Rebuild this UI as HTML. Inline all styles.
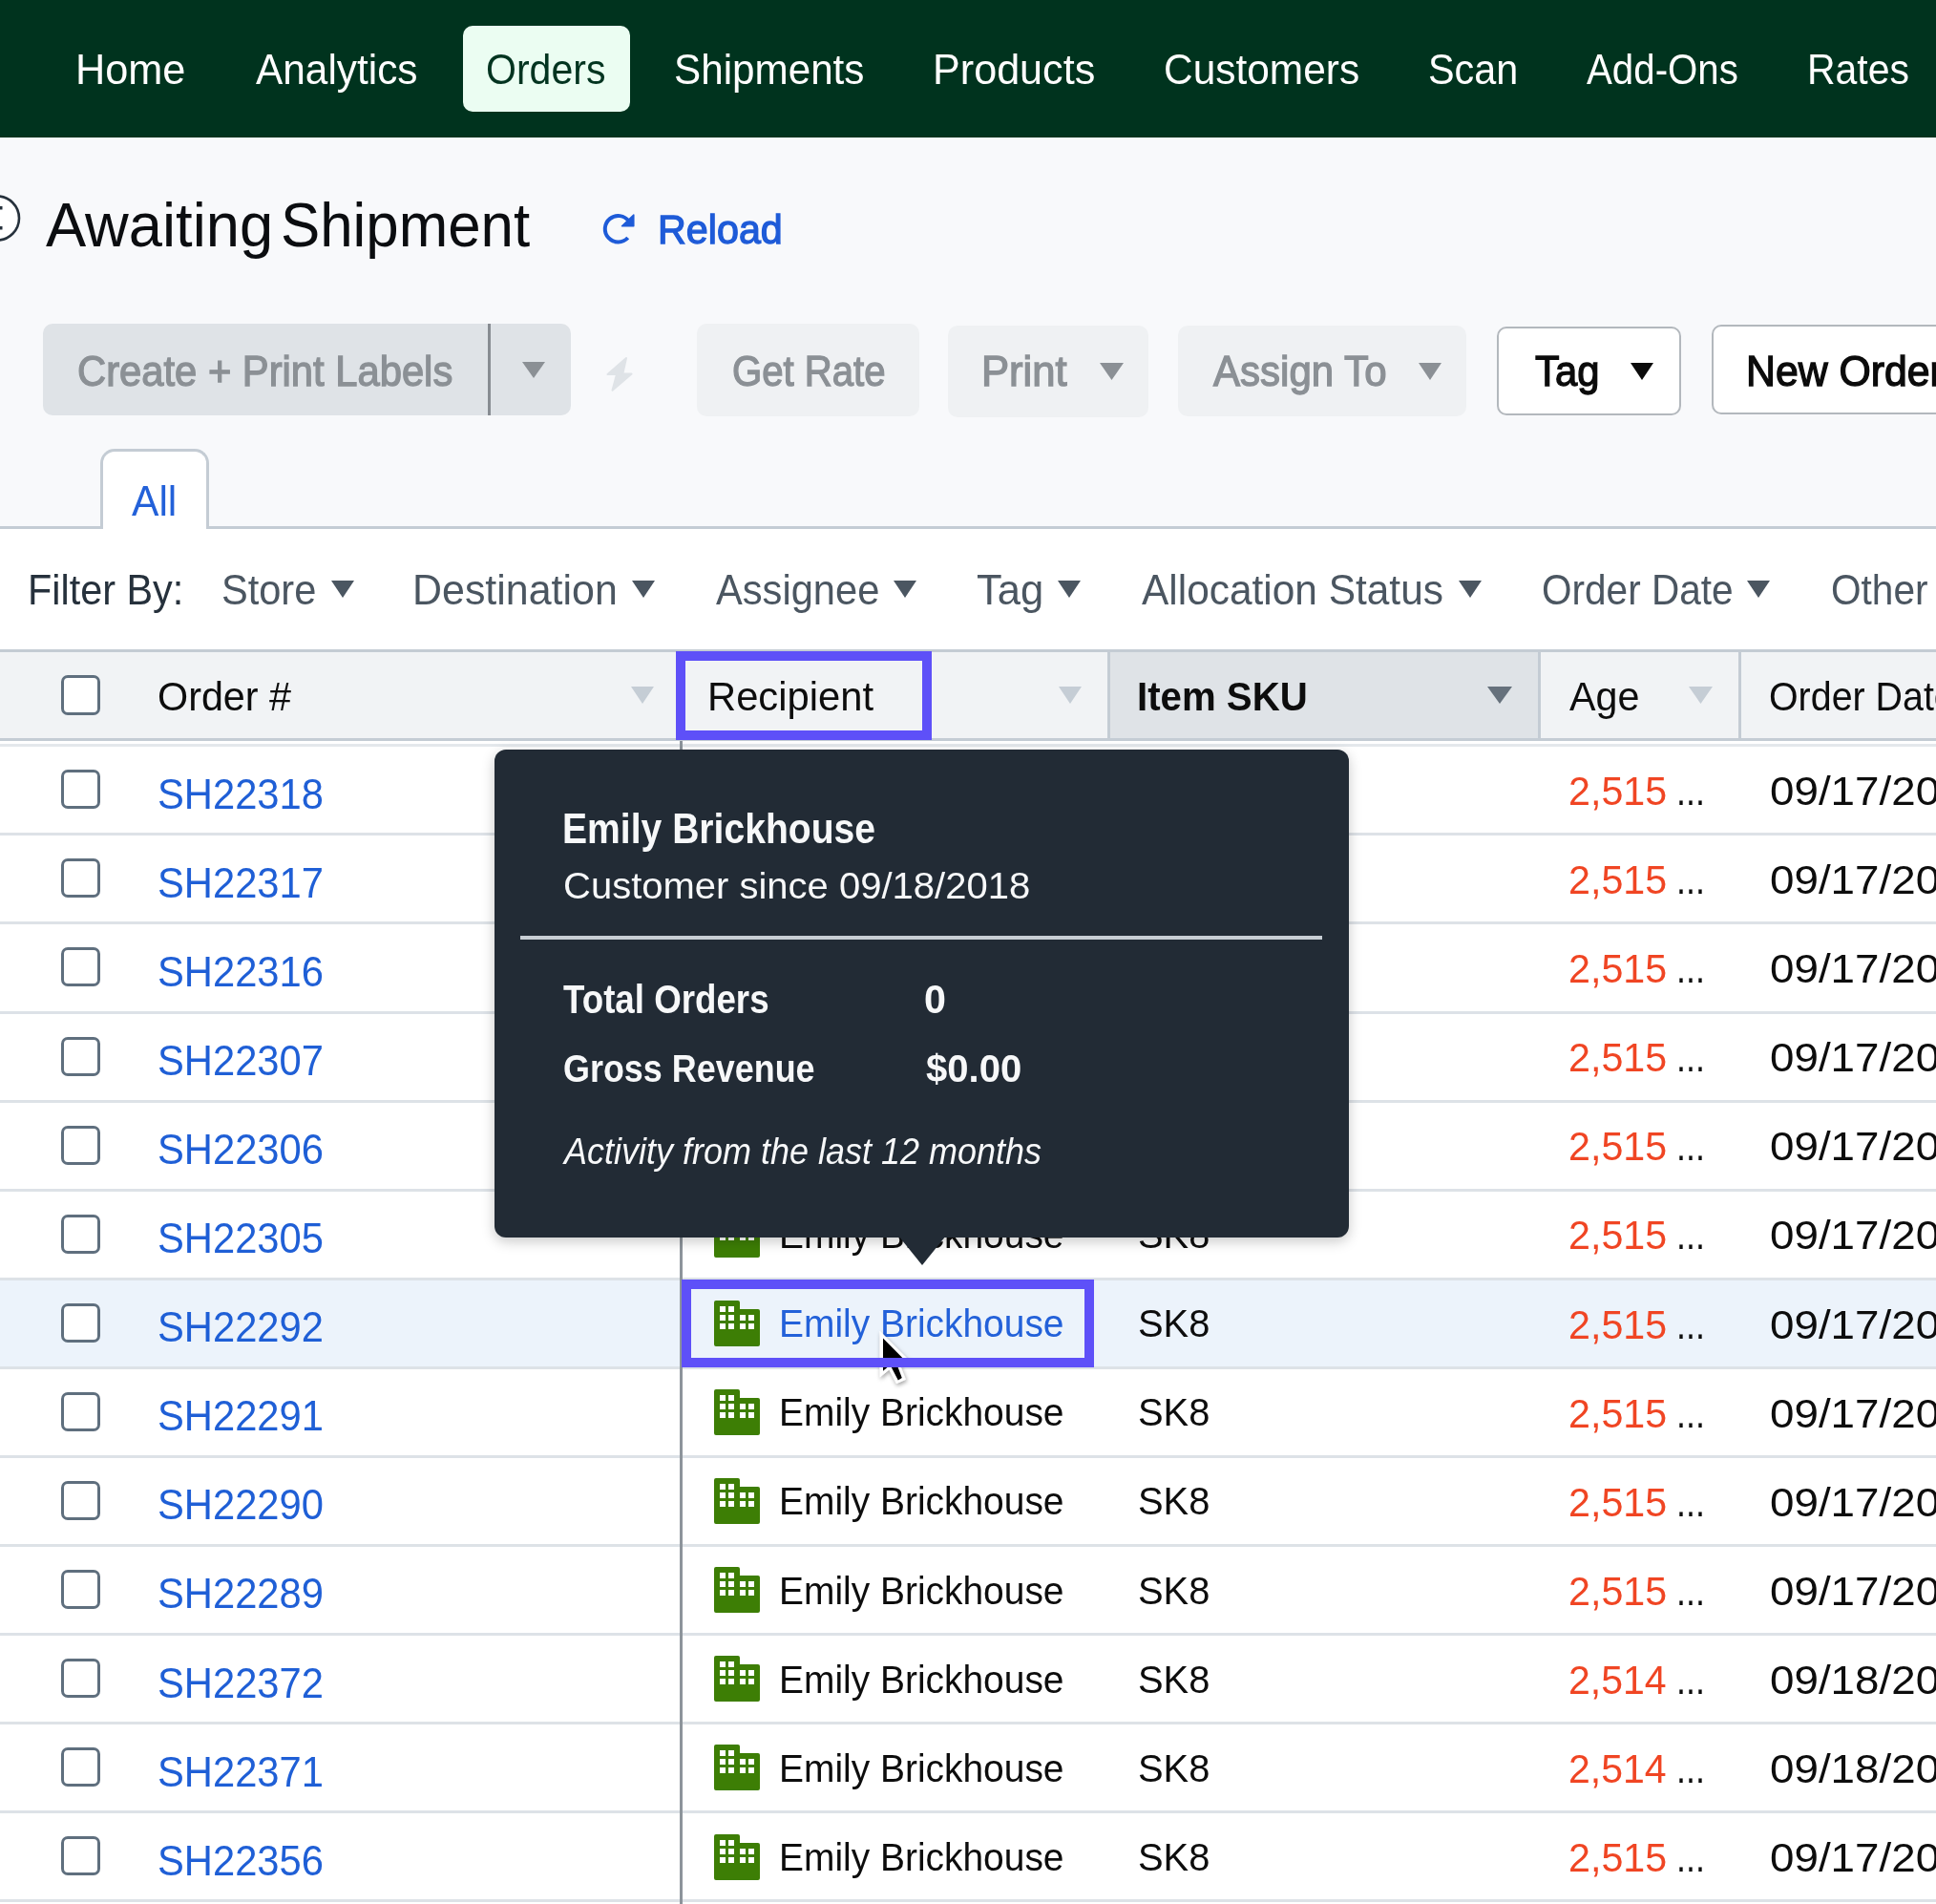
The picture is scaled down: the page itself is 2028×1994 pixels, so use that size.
<!DOCTYPE html>
<html><head><meta charset="utf-8"><title>Awaiting Shipment</title>
<style>
html,body{margin:0;padding:0;}
body{width:2028px;height:1994px;position:relative;overflow:hidden;background:#fff;font-family:"Liberation Sans",sans-serif;}
.t{position:absolute;white-space:nowrap;transform-origin:0 0;}
.r{position:absolute;box-sizing:border-box;}
</style></head><body>

<div class="r" style="left:0px;top:0px;width:2028px;height:144px;background:#00331e;"></div>
<div class="r" style="left:0px;top:144px;width:2028px;height:410px;background:#f8f9fb;"></div>
<div class="r" style="left:485px;top:27px;width:175px;height:90px;background:#ebfdf2;border-radius:10px;"></div>
<div class="t" style="left:79.43px;top:51.09px;font-size:44.19px;line-height:44.19px;color:#ffffff;transform:scaleX(0.9791);">Home</div>
<div class="t" style="left:267.89px;top:51.09px;font-size:44.19px;line-height:44.19px;color:#ffffff;transform:scaleX(0.9589);">Analytics</div>
<div class="t" style="left:509.05px;top:51.09px;font-size:44.19px;line-height:44.19px;color:#023420;transform:scaleX(0.9289);">Orders</div>
<div class="t" style="left:706.30px;top:51.09px;font-size:44.19px;line-height:44.19px;color:#ffffff;transform:scaleX(0.9554);">Shipments</div>
<div class="t" style="left:977.24px;top:51.09px;font-size:44.19px;line-height:44.19px;color:#ffffff;transform:scaleX(0.9762);">Products</div>
<div class="t" style="left:1219.38px;top:51.09px;font-size:44.19px;line-height:44.19px;color:#ffffff;transform:scaleX(0.9601);">Customers</div>
<div class="t" style="left:1495.74px;top:51.09px;font-size:44.19px;line-height:44.19px;color:#ffffff;transform:scaleX(0.9355);">Scan</div>
<div class="t" style="left:1662.30px;top:51.09px;font-size:44.19px;line-height:44.19px;color:#ffffff;transform:scaleX(0.9111);">Add-Ons</div>
<div class="t" style="left:1893.12px;top:51.09px;font-size:44.19px;line-height:44.19px;color:#ffffff;transform:scaleX(0.9270);">Rates</div>
<svg class="r" style="left:0;top:200px" width="30" height="60" viewBox="0 0 30 60"><circle cx="-3" cy="28.5" r="23" fill="#fff" stroke="#26313c" stroke-width="2.6"/><rect x="0" y="16" width="2.5" height="3.5" fill="#26313c"/><rect x="0" y="37" width="2.5" height="3.5" fill="#26313c"/></svg>
<div class="t" style="left:47.84px;top:203.72px;font-size:64.70px;line-height:64.70px;color:#0b0d10;transform:scaleX(0.9788);">Awaiting</div>
<div class="t" style="left:294.22px;top:203.72px;font-size:64.70px;line-height:64.70px;color:#0b0d10;transform:scaleX(0.9557);">Shipment</div>
<svg class="r" style="left:625px;top:218px" width="46" height="44" viewBox="0 0 46 44"><path d="M32.7 31 A13.75 13.75 0 1 1 33.8 13.9" fill="none" stroke="#1e5bd8" stroke-width="4"/><path d="M38.8 7 V18.8 H26.5 Z" fill="#1e5bd8" stroke="#1e5bd8" stroke-width="1.5" stroke-linejoin="round"/></svg>
<div class="t" style="left:689.21px;top:218.50px;font-size:42.88px;line-height:42.88px;color:#1e5bd8;-webkit-text-stroke:1.29px #1e5bd8;transform:scaleX(0.9627);">Reload</div>
<div class="r" style="left:45px;top:339px;width:553px;height:96px;background:#dfe3e7;border-radius:10px;"></div>
<div class="r" style="left:511px;top:339px;width:3px;height:96px;background:#878c92;"></div>
<div class="t" style="left:80.54px;top:366.59px;font-size:44.19px;line-height:44.19px;color:#8b9095;-webkit-text-stroke:1.33px #8b9095;transform:scaleX(0.9446);">Create + Print Labels</div>
<svg class="r" style="left:547px;top:379px;" width="24" height="17" viewBox="0 0 24 17"><path d="M0 0H24L12.0 17Z" fill="#8b9095"/></svg>
<svg class="r" style="left:630px;top:370px" width="40" height="44" viewBox="0 0 40 44"><path d="M26 5 L6.5 22 H16 L11.5 38.8 L31.6 21.6 H22.3 Z" fill="#dfe3e7" stroke="#dfe3e7" stroke-width="2" stroke-linejoin="round"/></svg>
<div class="r" style="left:730px;top:339px;width:233px;height:97px;background:#eff1f3;border-radius:10px;"></div>
<div class="t" style="left:766.60px;top:366.59px;font-size:44.19px;line-height:44.19px;color:#8b9095;-webkit-text-stroke:1.33px #8b9095;transform:scaleX(0.9081);">Get Rate</div>
<div class="r" style="left:993px;top:341px;width:210px;height:96px;background:#eff1f3;border-radius:10px;"></div>
<div class="t" style="left:1028.06px;top:366.59px;font-size:44.19px;line-height:44.19px;color:#8b9095;-webkit-text-stroke:1.33px #8b9095;transform:scaleX(0.9869);">Print</div>
<svg class="r" style="left:1152px;top:380px;" width="25" height="18" viewBox="0 0 25 18"><path d="M0 0H25L12.5 18Z" fill="#8b9095"/></svg>
<div class="r" style="left:1234px;top:341px;width:302px;height:95px;background:#eff1f3;border-radius:10px;"></div>
<div class="t" style="left:1270.53px;top:366.59px;font-size:44.19px;line-height:44.19px;color:#8b9095;-webkit-text-stroke:1.33px #8b9095;transform:scaleX(0.9515);">Assign To</div>
<svg class="r" style="left:1486px;top:380px;" width="24" height="18" viewBox="0 0 24 18"><path d="M0 0H24L12.0 18Z" fill="#8b9095"/></svg>
<div class="r" style="left:1568px;top:342px;width:193px;height:93px;background:#fff;border:2.5px solid #b3b8bd;border-radius:10px;"></div>
<div class="t" style="left:1607.69px;top:366.59px;font-size:44.19px;line-height:44.19px;color:#0b0b0b;-webkit-text-stroke:1.33px #0b0b0b;transform:scaleX(0.9460);">Tag</div>
<svg class="r" style="left:1708px;top:380px;" width="24" height="18" viewBox="0 0 24 18"><path d="M0 0H24L12.0 18Z" fill="#0b0b0b"/></svg>
<div class="r" style="left:1793px;top:340px;width:267px;height:94px;background:#fff;border:2.5px solid #b3b8bd;border-radius:10px;"></div>
<div class="t" style="left:1829.11px;top:366.59px;font-size:44.19px;line-height:44.19px;color:#0b0b0b;-webkit-text-stroke:1.33px #0b0b0b;transform:scaleX(0.9684);">New Order</div>
<div class="r" style="left:0px;top:551px;width:2028px;height:3px;background:#c4ccd4;"></div>
<div class="r" style="left:105px;top:470px;width:114px;height:84px;background:#fff;border:3px solid #c4ccd4;border-bottom:none;border-radius:15px 15px 0 0;"></div>
<div class="t" style="left:138.49px;top:502.99px;font-size:44.19px;line-height:44.19px;color:#2361d9;transform:scaleX(0.9639);">All</div>
<div class="t" style="left:29.08px;top:596.42px;font-size:44.62px;line-height:44.62px;color:#26313c;transform:scaleX(0.9279);">Filter By:</div>
<div class="t" style="left:232.13px;top:596.42px;font-size:44.62px;line-height:44.62px;color:#4b5661;transform:scaleX(0.9315);">Store</div>
<svg class="r" style="left:347px;top:608px;" width="24" height="18" viewBox="0 0 24 18"><path d="M0 0H24L12.0 18Z" fill="#4b5661"/></svg>
<div class="t" style="left:432.46px;top:596.42px;font-size:44.62px;line-height:44.62px;color:#4b5661;transform:scaleX(0.9624);">Destination</div>
<svg class="r" style="left:661.6px;top:608px;" width="24.0" height="18" viewBox="0 0 24.0 18"><path d="M0 0H24.0L12.0 18Z" fill="#4b5661"/></svg>
<div class="t" style="left:749.90px;top:596.42px;font-size:44.62px;line-height:44.62px;color:#4b5661;transform:scaleX(0.9339);">Assignee</div>
<svg class="r" style="left:936px;top:608px;" width="24" height="18" viewBox="0 0 24 18"><path d="M0 0H24L12.0 18Z" fill="#4b5661"/></svg>
<div class="t" style="left:1023.02px;top:596.42px;font-size:44.62px;line-height:44.62px;color:#4b5661;transform:scaleX(0.9772);">Tag</div>
<svg class="r" style="left:1107.5px;top:608px;" width="24.0" height="18" viewBox="0 0 24.0 18"><path d="M0 0H24.0L12.0 18Z" fill="#4b5661"/></svg>
<div class="t" style="left:1195.89px;top:596.42px;font-size:44.62px;line-height:44.62px;color:#4b5661;transform:scaleX(0.9508);">Allocation Status</div>
<svg class="r" style="left:1528px;top:608px;" width="24" height="18" viewBox="0 0 24 18"><path d="M0 0H24L12.0 18Z" fill="#4b5661"/></svg>
<div class="t" style="left:1615.07px;top:596.42px;font-size:44.62px;line-height:44.62px;color:#4b5661;transform:scaleX(0.9093);">Order Date</div>
<svg class="r" style="left:1829.5px;top:608px;" width="24.0" height="18" viewBox="0 0 24.0 18"><path d="M0 0H24.0L12.0 18Z" fill="#4b5661"/></svg>
<div class="t" style="left:1917.57px;top:596.42px;font-size:44.62px;line-height:44.62px;color:#4b5661;transform:scaleX(0.9102);">Other</div>
<div class="r" style="left:0px;top:680px;width:2028px;height:3px;background:#c4ccd4;"></div>
<div class="r" style="left:0px;top:683px;width:2028px;height:90px;background:#f1f3f5;"></div>
<div class="r" style="left:1163px;top:683px;width:448px;height:90px;background:#dfe3e7;"></div>
<div class="r" style="left:0px;top:773px;width:2028px;height:3px;background:#c4ccd4;"></div>
<div class="r" style="left:1160px;top:683px;width:3px;height:90px;background:#c4ccd4;"></div>
<div class="r" style="left:1611px;top:683px;width:3px;height:90px;background:#c4ccd4;"></div>
<div class="r" style="left:1821px;top:683px;width:3px;height:90px;background:#c4ccd4;"></div>
<div class="r" style="left:64px;top:707px;width:41px;height:42px;background:#fff;border:3px solid #5f6f7e;border-radius:7px;"></div>
<div class="t" style="left:165.04px;top:707.73px;font-size:43.31px;line-height:43.31px;color:#0d0d0d;transform:scaleX(0.9539);">Order #</div>
<svg class="r" style="left:661px;top:719px;" width="24" height="18" viewBox="0 0 24 18"><path d="M0 0H24L12.0 18Z" fill="#c5cdd5"/></svg>
<div class="t" style="left:740.55px;top:707.73px;font-size:43.31px;line-height:43.31px;color:#0d0d0d;transform:scaleX(0.9642);">Recipient</div>
<svg class="r" style="left:1109px;top:719px;" width="24" height="18" viewBox="0 0 24 18"><path d="M0 0H24L12.0 18Z" fill="#c5cdd5"/></svg>
<div class="t" style="left:1191.28px;top:707.73px;font-size:43.31px;line-height:43.31px;color:#0d0d0d;font-weight:bold;transform:scaleX(0.9288);">Item SKU</div>
<svg class="r" style="left:1558px;top:719px;" width="26" height="18" viewBox="0 0 26 18"><path d="M0 0H26L13.0 18Z" fill="#66717c"/></svg>
<div class="t" style="left:1643.90px;top:707.73px;font-size:43.31px;line-height:43.31px;color:#0d0d0d;transform:scaleX(0.9528);">Age</div>
<svg class="r" style="left:1769px;top:719px;" width="25" height="18" viewBox="0 0 25 18"><path d="M0 0H25L12.5 18Z" fill="#c5cdd5"/></svg>
<div class="t" style="left:1853.13px;top:707.73px;font-size:43.31px;line-height:43.31px;color:#0d0d0d;transform:scaleX(0.9093);">Order Date</div>
<div class="r" style="left:0px;top:779px;width:2028px;height:3px;background:#e4e8ec;"></div>
<div class="r" style="left:0px;top:1341px;width:2028px;height:91px;background:#ecf3fb;"></div>
<div class="r" style="left:0px;top:872px;width:2028px;height:3px;background:#dde2e7;"></div>
<div class="r" style="left:64px;top:806px;width:41px;height:41px;background:#fff;border:3px solid #5f6f7e;border-radius:7px;"></div>
<div class="t" style="left:164.52px;top:809.63px;font-size:43.90px;line-height:43.90px;color:#1f5fd6;transform:scaleX(0.9503);">SH22318</div>
<svg class="r" style="left:748px;top:803.4px" width="48" height="48" viewBox="0 0 48 48"><path d="M2 0H25A2 2 0 0 1 27 2V9H46A2 2 0 0 1 48 11V46A2 2 0 0 1 46 48H2A2 2 0 0 1 0 46V2A2 2 0 0 1 2 0Z" fill="#3d7e05"/><g fill="#fff"><rect x="6" y="6" width="6" height="6"/><rect x="15" y="6" width="6" height="6"/><rect x="6" y="15" width="6" height="6"/><rect x="15" y="15" width="6" height="6"/><rect x="27" y="15" width="6" height="6"/><rect x="36" y="15" width="6" height="6"/><rect x="6" y="24" width="6" height="6"/><rect x="15" y="24" width="6" height="6"/><rect x="27" y="24" width="6" height="6"/><rect x="36" y="24" width="6" height="6"/></g></svg>
<div class="t" style="left:816.09px;top:807.72px;font-size:40.84px;line-height:40.84px;color:#0d0d0d;transform:scaleX(0.9534);">Emily Brickhouse</div>
<div class="t" style="left:1191.90px;top:807.72px;font-size:40.84px;line-height:40.84px;color:#0d0d0d;transform:scaleX(0.9766);">SK8</div>
<div class="t" style="left:1643.24px;top:807.03px;font-size:43.31px;line-height:43.31px;color:#f04523;transform:scaleX(0.9522);">2,515</div>
<div class="t" style="left:1755.77px;top:807.04px;font-size:43.30px;line-height:43.30px;color:#0d0d0d;transform:scaleX(0.8282);">...</div>
<div class="t" style="left:1853.57px;top:807.03px;font-size:43.31px;line-height:43.31px;color:#0d0d0d;transform:scaleX(1.0566);">09/17/20</div>
<div class="r" style="left:0px;top:965px;width:2028px;height:3px;background:#dde2e7;"></div>
<div class="r" style="left:64px;top:899px;width:41px;height:41px;background:#fff;border:3px solid #5f6f7e;border-radius:7px;"></div>
<div class="t" style="left:164.52px;top:902.72px;font-size:43.90px;line-height:43.90px;color:#1f5fd6;transform:scaleX(0.9503);">SH22317</div>
<svg class="r" style="left:748px;top:896.5px" width="48" height="48" viewBox="0 0 48 48"><path d="M2 0H25A2 2 0 0 1 27 2V9H46A2 2 0 0 1 48 11V46A2 2 0 0 1 46 48H2A2 2 0 0 1 0 46V2A2 2 0 0 1 2 0Z" fill="#3d7e05"/><g fill="#fff"><rect x="6" y="6" width="6" height="6"/><rect x="15" y="6" width="6" height="6"/><rect x="6" y="15" width="6" height="6"/><rect x="15" y="15" width="6" height="6"/><rect x="27" y="15" width="6" height="6"/><rect x="36" y="15" width="6" height="6"/><rect x="6" y="24" width="6" height="6"/><rect x="15" y="24" width="6" height="6"/><rect x="27" y="24" width="6" height="6"/><rect x="36" y="24" width="6" height="6"/></g></svg>
<div class="t" style="left:816.09px;top:900.81px;font-size:40.84px;line-height:40.84px;color:#0d0d0d;transform:scaleX(0.9534);">Emily Brickhouse</div>
<div class="t" style="left:1191.90px;top:900.81px;font-size:40.84px;line-height:40.84px;color:#0d0d0d;transform:scaleX(0.9766);">SK8</div>
<div class="t" style="left:1643.24px;top:900.12px;font-size:43.31px;line-height:43.31px;color:#f04523;transform:scaleX(0.9522);">2,515</div>
<div class="t" style="left:1755.77px;top:900.13px;font-size:43.30px;line-height:43.30px;color:#0d0d0d;transform:scaleX(0.8282);">...</div>
<div class="t" style="left:1853.57px;top:900.12px;font-size:43.31px;line-height:43.31px;color:#0d0d0d;transform:scaleX(1.0566);">09/17/20</div>
<div class="r" style="left:0px;top:1059px;width:2028px;height:3px;background:#dde2e7;"></div>
<div class="r" style="left:64px;top:992px;width:41px;height:41px;background:#fff;border:3px solid #5f6f7e;border-radius:7px;"></div>
<div class="t" style="left:164.52px;top:995.81px;font-size:43.90px;line-height:43.90px;color:#1f5fd6;transform:scaleX(0.9503);">SH22316</div>
<svg class="r" style="left:748px;top:989.6px" width="48" height="48" viewBox="0 0 48 48"><path d="M2 0H25A2 2 0 0 1 27 2V9H46A2 2 0 0 1 48 11V46A2 2 0 0 1 46 48H2A2 2 0 0 1 0 46V2A2 2 0 0 1 2 0Z" fill="#3d7e05"/><g fill="#fff"><rect x="6" y="6" width="6" height="6"/><rect x="15" y="6" width="6" height="6"/><rect x="6" y="15" width="6" height="6"/><rect x="15" y="15" width="6" height="6"/><rect x="27" y="15" width="6" height="6"/><rect x="36" y="15" width="6" height="6"/><rect x="6" y="24" width="6" height="6"/><rect x="15" y="24" width="6" height="6"/><rect x="27" y="24" width="6" height="6"/><rect x="36" y="24" width="6" height="6"/></g></svg>
<div class="t" style="left:816.09px;top:993.90px;font-size:40.84px;line-height:40.84px;color:#0d0d0d;transform:scaleX(0.9534);">Emily Brickhouse</div>
<div class="t" style="left:1191.90px;top:993.90px;font-size:40.84px;line-height:40.84px;color:#0d0d0d;transform:scaleX(0.9766);">SK8</div>
<div class="t" style="left:1643.24px;top:993.21px;font-size:43.31px;line-height:43.31px;color:#f04523;transform:scaleX(0.9522);">2,515</div>
<div class="t" style="left:1755.77px;top:993.22px;font-size:43.30px;line-height:43.30px;color:#0d0d0d;transform:scaleX(0.8282);">...</div>
<div class="t" style="left:1853.57px;top:993.21px;font-size:43.31px;line-height:43.31px;color:#0d0d0d;transform:scaleX(1.0566);">09/17/20</div>
<div class="r" style="left:0px;top:1152px;width:2028px;height:3px;background:#dde2e7;"></div>
<div class="r" style="left:64px;top:1086px;width:41px;height:41px;background:#fff;border:3px solid #5f6f7e;border-radius:7px;"></div>
<div class="t" style="left:164.52px;top:1088.90px;font-size:43.90px;line-height:43.90px;color:#1f5fd6;transform:scaleX(0.9503);">SH22307</div>
<svg class="r" style="left:748px;top:1082.7px" width="48" height="48" viewBox="0 0 48 48"><path d="M2 0H25A2 2 0 0 1 27 2V9H46A2 2 0 0 1 48 11V46A2 2 0 0 1 46 48H2A2 2 0 0 1 0 46V2A2 2 0 0 1 2 0Z" fill="#3d7e05"/><g fill="#fff"><rect x="6" y="6" width="6" height="6"/><rect x="15" y="6" width="6" height="6"/><rect x="6" y="15" width="6" height="6"/><rect x="15" y="15" width="6" height="6"/><rect x="27" y="15" width="6" height="6"/><rect x="36" y="15" width="6" height="6"/><rect x="6" y="24" width="6" height="6"/><rect x="15" y="24" width="6" height="6"/><rect x="27" y="24" width="6" height="6"/><rect x="36" y="24" width="6" height="6"/></g></svg>
<div class="t" style="left:816.09px;top:1086.99px;font-size:40.84px;line-height:40.84px;color:#0d0d0d;transform:scaleX(0.9534);">Emily Brickhouse</div>
<div class="t" style="left:1191.90px;top:1086.99px;font-size:40.84px;line-height:40.84px;color:#0d0d0d;transform:scaleX(0.9766);">SK8</div>
<div class="t" style="left:1643.24px;top:1086.30px;font-size:43.31px;line-height:43.31px;color:#f04523;transform:scaleX(0.9522);">2,515</div>
<div class="t" style="left:1755.77px;top:1086.31px;font-size:43.30px;line-height:43.30px;color:#0d0d0d;transform:scaleX(0.8282);">...</div>
<div class="t" style="left:1853.57px;top:1086.30px;font-size:43.31px;line-height:43.31px;color:#0d0d0d;transform:scaleX(1.0566);">09/17/20</div>
<div class="r" style="left:0px;top:1245px;width:2028px;height:3px;background:#dde2e7;"></div>
<div class="r" style="left:64px;top:1179px;width:41px;height:41px;background:#fff;border:3px solid #5f6f7e;border-radius:7px;"></div>
<div class="t" style="left:164.52px;top:1181.99px;font-size:43.90px;line-height:43.90px;color:#1f5fd6;transform:scaleX(0.9503);">SH22306</div>
<svg class="r" style="left:748px;top:1175.8px" width="48" height="48" viewBox="0 0 48 48"><path d="M2 0H25A2 2 0 0 1 27 2V9H46A2 2 0 0 1 48 11V46A2 2 0 0 1 46 48H2A2 2 0 0 1 0 46V2A2 2 0 0 1 2 0Z" fill="#3d7e05"/><g fill="#fff"><rect x="6" y="6" width="6" height="6"/><rect x="15" y="6" width="6" height="6"/><rect x="6" y="15" width="6" height="6"/><rect x="15" y="15" width="6" height="6"/><rect x="27" y="15" width="6" height="6"/><rect x="36" y="15" width="6" height="6"/><rect x="6" y="24" width="6" height="6"/><rect x="15" y="24" width="6" height="6"/><rect x="27" y="24" width="6" height="6"/><rect x="36" y="24" width="6" height="6"/></g></svg>
<div class="t" style="left:816.09px;top:1180.08px;font-size:40.84px;line-height:40.84px;color:#0d0d0d;transform:scaleX(0.9534);">Emily Brickhouse</div>
<div class="t" style="left:1191.90px;top:1180.08px;font-size:40.84px;line-height:40.84px;color:#0d0d0d;transform:scaleX(0.9766);">SK8</div>
<div class="t" style="left:1643.24px;top:1179.39px;font-size:43.31px;line-height:43.31px;color:#f04523;transform:scaleX(0.9522);">2,515</div>
<div class="t" style="left:1755.77px;top:1179.40px;font-size:43.30px;line-height:43.30px;color:#0d0d0d;transform:scaleX(0.8282);">...</div>
<div class="t" style="left:1853.57px;top:1179.39px;font-size:43.31px;line-height:43.31px;color:#0d0d0d;transform:scaleX(1.0566);">09/17/20</div>
<div class="r" style="left:0px;top:1338px;width:2028px;height:3px;background:#dde2e7;"></div>
<div class="r" style="left:64px;top:1272px;width:41px;height:41px;background:#fff;border:3px solid #5f6f7e;border-radius:7px;"></div>
<div class="t" style="left:164.52px;top:1275.08px;font-size:43.90px;line-height:43.90px;color:#1f5fd6;transform:scaleX(0.9503);">SH22305</div>
<svg class="r" style="left:748px;top:1268.8px" width="48" height="48" viewBox="0 0 48 48"><path d="M2 0H25A2 2 0 0 1 27 2V9H46A2 2 0 0 1 48 11V46A2 2 0 0 1 46 48H2A2 2 0 0 1 0 46V2A2 2 0 0 1 2 0Z" fill="#3d7e05"/><g fill="#fff"><rect x="6" y="6" width="6" height="6"/><rect x="15" y="6" width="6" height="6"/><rect x="6" y="15" width="6" height="6"/><rect x="15" y="15" width="6" height="6"/><rect x="27" y="15" width="6" height="6"/><rect x="36" y="15" width="6" height="6"/><rect x="6" y="24" width="6" height="6"/><rect x="15" y="24" width="6" height="6"/><rect x="27" y="24" width="6" height="6"/><rect x="36" y="24" width="6" height="6"/></g></svg>
<div class="t" style="left:816.09px;top:1273.17px;font-size:40.84px;line-height:40.84px;color:#0d0d0d;transform:scaleX(0.9534);">Emily Brickhouse</div>
<div class="t" style="left:1191.90px;top:1273.17px;font-size:40.84px;line-height:40.84px;color:#0d0d0d;transform:scaleX(0.9766);">SK8</div>
<div class="t" style="left:1643.24px;top:1272.48px;font-size:43.31px;line-height:43.31px;color:#f04523;transform:scaleX(0.9522);">2,515</div>
<div class="t" style="left:1755.77px;top:1272.49px;font-size:43.30px;line-height:43.30px;color:#0d0d0d;transform:scaleX(0.8282);">...</div>
<div class="t" style="left:1853.57px;top:1272.48px;font-size:43.31px;line-height:43.31px;color:#0d0d0d;transform:scaleX(1.0566);">09/17/20</div>
<div class="r" style="left:0px;top:1431px;width:2028px;height:3px;background:#dde2e7;"></div>
<div class="r" style="left:64px;top:1365px;width:41px;height:41px;background:#fff;border:3px solid #5f6f7e;border-radius:7px;"></div>
<div class="t" style="left:164.52px;top:1368.17px;font-size:43.90px;line-height:43.90px;color:#1f5fd6;transform:scaleX(0.9503);">SH22292</div>
<svg class="r" style="left:748px;top:1361.9px" width="48" height="48" viewBox="0 0 48 48"><path d="M2 0H25A2 2 0 0 1 27 2V9H46A2 2 0 0 1 48 11V46A2 2 0 0 1 46 48H2A2 2 0 0 1 0 46V2A2 2 0 0 1 2 0Z" fill="#3d7e05"/><g fill="#fff"><rect x="6" y="6" width="6" height="6"/><rect x="15" y="6" width="6" height="6"/><rect x="6" y="15" width="6" height="6"/><rect x="15" y="15" width="6" height="6"/><rect x="27" y="15" width="6" height="6"/><rect x="36" y="15" width="6" height="6"/><rect x="6" y="24" width="6" height="6"/><rect x="15" y="24" width="6" height="6"/><rect x="27" y="24" width="6" height="6"/><rect x="36" y="24" width="6" height="6"/></g></svg>
<div class="t" style="left:816.09px;top:1366.26px;font-size:40.84px;line-height:40.84px;color:#2361d9;transform:scaleX(0.9534);">Emily Brickhouse</div>
<div class="t" style="left:1191.90px;top:1366.26px;font-size:40.84px;line-height:40.84px;color:#0d0d0d;transform:scaleX(0.9766);">SK8</div>
<div class="t" style="left:1643.24px;top:1365.57px;font-size:43.31px;line-height:43.31px;color:#f04523;transform:scaleX(0.9522);">2,515</div>
<div class="t" style="left:1755.77px;top:1365.58px;font-size:43.30px;line-height:43.30px;color:#0d0d0d;transform:scaleX(0.8282);">...</div>
<div class="t" style="left:1853.57px;top:1365.57px;font-size:43.31px;line-height:43.31px;color:#0d0d0d;transform:scaleX(1.0566);">09/17/20</div>
<div class="r" style="left:0px;top:1524px;width:2028px;height:3px;background:#dde2e7;"></div>
<div class="r" style="left:64px;top:1458px;width:41px;height:41px;background:#fff;border:3px solid #5f6f7e;border-radius:7px;"></div>
<div class="t" style="left:164.52px;top:1461.26px;font-size:43.90px;line-height:43.90px;color:#1f5fd6;transform:scaleX(0.9503);">SH22291</div>
<svg class="r" style="left:748px;top:1455.0px" width="48" height="48" viewBox="0 0 48 48"><path d="M2 0H25A2 2 0 0 1 27 2V9H46A2 2 0 0 1 48 11V46A2 2 0 0 1 46 48H2A2 2 0 0 1 0 46V2A2 2 0 0 1 2 0Z" fill="#3d7e05"/><g fill="#fff"><rect x="6" y="6" width="6" height="6"/><rect x="15" y="6" width="6" height="6"/><rect x="6" y="15" width="6" height="6"/><rect x="15" y="15" width="6" height="6"/><rect x="27" y="15" width="6" height="6"/><rect x="36" y="15" width="6" height="6"/><rect x="6" y="24" width="6" height="6"/><rect x="15" y="24" width="6" height="6"/><rect x="27" y="24" width="6" height="6"/><rect x="36" y="24" width="6" height="6"/></g></svg>
<div class="t" style="left:816.09px;top:1459.35px;font-size:40.84px;line-height:40.84px;color:#0d0d0d;transform:scaleX(0.9534);">Emily Brickhouse</div>
<div class="t" style="left:1191.90px;top:1459.35px;font-size:40.84px;line-height:40.84px;color:#0d0d0d;transform:scaleX(0.9766);">SK8</div>
<div class="t" style="left:1643.24px;top:1458.66px;font-size:43.31px;line-height:43.31px;color:#f04523;transform:scaleX(0.9522);">2,515</div>
<div class="t" style="left:1755.77px;top:1458.67px;font-size:43.30px;line-height:43.30px;color:#0d0d0d;transform:scaleX(0.8282);">...</div>
<div class="t" style="left:1853.57px;top:1458.66px;font-size:43.31px;line-height:43.31px;color:#0d0d0d;transform:scaleX(1.0566);">09/17/20</div>
<div class="r" style="left:0px;top:1617px;width:2028px;height:3px;background:#dde2e7;"></div>
<div class="r" style="left:64px;top:1551px;width:41px;height:41px;background:#fff;border:3px solid #5f6f7e;border-radius:7px;"></div>
<div class="t" style="left:164.52px;top:1554.35px;font-size:43.90px;line-height:43.90px;color:#1f5fd6;transform:scaleX(0.9503);">SH22290</div>
<svg class="r" style="left:748px;top:1548.1px" width="48" height="48" viewBox="0 0 48 48"><path d="M2 0H25A2 2 0 0 1 27 2V9H46A2 2 0 0 1 48 11V46A2 2 0 0 1 46 48H2A2 2 0 0 1 0 46V2A2 2 0 0 1 2 0Z" fill="#3d7e05"/><g fill="#fff"><rect x="6" y="6" width="6" height="6"/><rect x="15" y="6" width="6" height="6"/><rect x="6" y="15" width="6" height="6"/><rect x="15" y="15" width="6" height="6"/><rect x="27" y="15" width="6" height="6"/><rect x="36" y="15" width="6" height="6"/><rect x="6" y="24" width="6" height="6"/><rect x="15" y="24" width="6" height="6"/><rect x="27" y="24" width="6" height="6"/><rect x="36" y="24" width="6" height="6"/></g></svg>
<div class="t" style="left:816.09px;top:1552.44px;font-size:40.84px;line-height:40.84px;color:#0d0d0d;transform:scaleX(0.9534);">Emily Brickhouse</div>
<div class="t" style="left:1191.90px;top:1552.44px;font-size:40.84px;line-height:40.84px;color:#0d0d0d;transform:scaleX(0.9766);">SK8</div>
<div class="t" style="left:1643.24px;top:1551.75px;font-size:43.31px;line-height:43.31px;color:#f04523;transform:scaleX(0.9522);">2,515</div>
<div class="t" style="left:1755.77px;top:1551.76px;font-size:43.30px;line-height:43.30px;color:#0d0d0d;transform:scaleX(0.8282);">...</div>
<div class="t" style="left:1853.57px;top:1551.75px;font-size:43.31px;line-height:43.31px;color:#0d0d0d;transform:scaleX(1.0566);">09/17/20</div>
<div class="r" style="left:0px;top:1710px;width:2028px;height:3px;background:#dde2e7;"></div>
<div class="r" style="left:64px;top:1644px;width:41px;height:41px;background:#fff;border:3px solid #5f6f7e;border-radius:7px;"></div>
<div class="t" style="left:164.52px;top:1647.44px;font-size:43.90px;line-height:43.90px;color:#1f5fd6;transform:scaleX(0.9503);">SH22289</div>
<svg class="r" style="left:748px;top:1641.2px" width="48" height="48" viewBox="0 0 48 48"><path d="M2 0H25A2 2 0 0 1 27 2V9H46A2 2 0 0 1 48 11V46A2 2 0 0 1 46 48H2A2 2 0 0 1 0 46V2A2 2 0 0 1 2 0Z" fill="#3d7e05"/><g fill="#fff"><rect x="6" y="6" width="6" height="6"/><rect x="15" y="6" width="6" height="6"/><rect x="6" y="15" width="6" height="6"/><rect x="15" y="15" width="6" height="6"/><rect x="27" y="15" width="6" height="6"/><rect x="36" y="15" width="6" height="6"/><rect x="6" y="24" width="6" height="6"/><rect x="15" y="24" width="6" height="6"/><rect x="27" y="24" width="6" height="6"/><rect x="36" y="24" width="6" height="6"/></g></svg>
<div class="t" style="left:816.09px;top:1645.53px;font-size:40.84px;line-height:40.84px;color:#0d0d0d;transform:scaleX(0.9534);">Emily Brickhouse</div>
<div class="t" style="left:1191.90px;top:1645.53px;font-size:40.84px;line-height:40.84px;color:#0d0d0d;transform:scaleX(0.9766);">SK8</div>
<div class="t" style="left:1643.24px;top:1644.84px;font-size:43.31px;line-height:43.31px;color:#f04523;transform:scaleX(0.9522);">2,515</div>
<div class="t" style="left:1755.77px;top:1644.85px;font-size:43.30px;line-height:43.30px;color:#0d0d0d;transform:scaleX(0.8282);">...</div>
<div class="t" style="left:1853.57px;top:1644.84px;font-size:43.31px;line-height:43.31px;color:#0d0d0d;transform:scaleX(1.0566);">09/17/20</div>
<div class="r" style="left:0px;top:1803px;width:2028px;height:3px;background:#dde2e7;"></div>
<div class="r" style="left:64px;top:1737px;width:41px;height:41px;background:#fff;border:3px solid #5f6f7e;border-radius:7px;"></div>
<div class="t" style="left:164.52px;top:1740.53px;font-size:43.90px;line-height:43.90px;color:#1f5fd6;transform:scaleX(0.9503);">SH22372</div>
<svg class="r" style="left:748px;top:1734.3px" width="48" height="48" viewBox="0 0 48 48"><path d="M2 0H25A2 2 0 0 1 27 2V9H46A2 2 0 0 1 48 11V46A2 2 0 0 1 46 48H2A2 2 0 0 1 0 46V2A2 2 0 0 1 2 0Z" fill="#3d7e05"/><g fill="#fff"><rect x="6" y="6" width="6" height="6"/><rect x="15" y="6" width="6" height="6"/><rect x="6" y="15" width="6" height="6"/><rect x="15" y="15" width="6" height="6"/><rect x="27" y="15" width="6" height="6"/><rect x="36" y="15" width="6" height="6"/><rect x="6" y="24" width="6" height="6"/><rect x="15" y="24" width="6" height="6"/><rect x="27" y="24" width="6" height="6"/><rect x="36" y="24" width="6" height="6"/></g></svg>
<div class="t" style="left:816.09px;top:1738.62px;font-size:40.84px;line-height:40.84px;color:#0d0d0d;transform:scaleX(0.9534);">Emily Brickhouse</div>
<div class="t" style="left:1191.90px;top:1738.62px;font-size:40.84px;line-height:40.84px;color:#0d0d0d;transform:scaleX(0.9766);">SK8</div>
<div class="t" style="left:1643.25px;top:1737.93px;font-size:43.31px;line-height:43.31px;color:#f04523;transform:scaleX(0.9473);">2,514</div>
<div class="t" style="left:1755.77px;top:1737.94px;font-size:43.30px;line-height:43.30px;color:#0d0d0d;transform:scaleX(0.8282);">...</div>
<div class="t" style="left:1853.57px;top:1737.93px;font-size:43.31px;line-height:43.31px;color:#0d0d0d;transform:scaleX(1.0566);">09/18/20</div>
<div class="r" style="left:0px;top:1896px;width:2028px;height:3px;background:#dde2e7;"></div>
<div class="r" style="left:64px;top:1830px;width:41px;height:41px;background:#fff;border:3px solid #5f6f7e;border-radius:7px;"></div>
<div class="t" style="left:164.52px;top:1833.62px;font-size:43.90px;line-height:43.90px;color:#1f5fd6;transform:scaleX(0.9503);">SH22371</div>
<svg class="r" style="left:748px;top:1827.4px" width="48" height="48" viewBox="0 0 48 48"><path d="M2 0H25A2 2 0 0 1 27 2V9H46A2 2 0 0 1 48 11V46A2 2 0 0 1 46 48H2A2 2 0 0 1 0 46V2A2 2 0 0 1 2 0Z" fill="#3d7e05"/><g fill="#fff"><rect x="6" y="6" width="6" height="6"/><rect x="15" y="6" width="6" height="6"/><rect x="6" y="15" width="6" height="6"/><rect x="15" y="15" width="6" height="6"/><rect x="27" y="15" width="6" height="6"/><rect x="36" y="15" width="6" height="6"/><rect x="6" y="24" width="6" height="6"/><rect x="15" y="24" width="6" height="6"/><rect x="27" y="24" width="6" height="6"/><rect x="36" y="24" width="6" height="6"/></g></svg>
<div class="t" style="left:816.09px;top:1831.71px;font-size:40.84px;line-height:40.84px;color:#0d0d0d;transform:scaleX(0.9534);">Emily Brickhouse</div>
<div class="t" style="left:1191.90px;top:1831.71px;font-size:40.84px;line-height:40.84px;color:#0d0d0d;transform:scaleX(0.9766);">SK8</div>
<div class="t" style="left:1643.25px;top:1831.02px;font-size:43.31px;line-height:43.31px;color:#f04523;transform:scaleX(0.9473);">2,514</div>
<div class="t" style="left:1755.77px;top:1831.03px;font-size:43.30px;line-height:43.30px;color:#0d0d0d;transform:scaleX(0.8282);">...</div>
<div class="t" style="left:1853.57px;top:1831.02px;font-size:43.31px;line-height:43.31px;color:#0d0d0d;transform:scaleX(1.0566);">09/18/20</div>
<div class="r" style="left:0px;top:1989px;width:2028px;height:3px;background:#dde2e7;"></div>
<div class="r" style="left:64px;top:1923px;width:41px;height:41px;background:#fff;border:3px solid #5f6f7e;border-radius:7px;"></div>
<div class="t" style="left:164.52px;top:1926.71px;font-size:43.90px;line-height:43.90px;color:#1f5fd6;transform:scaleX(0.9503);">SH22356</div>
<svg class="r" style="left:748px;top:1920.5px" width="48" height="48" viewBox="0 0 48 48"><path d="M2 0H25A2 2 0 0 1 27 2V9H46A2 2 0 0 1 48 11V46A2 2 0 0 1 46 48H2A2 2 0 0 1 0 46V2A2 2 0 0 1 2 0Z" fill="#3d7e05"/><g fill="#fff"><rect x="6" y="6" width="6" height="6"/><rect x="15" y="6" width="6" height="6"/><rect x="6" y="15" width="6" height="6"/><rect x="15" y="15" width="6" height="6"/><rect x="27" y="15" width="6" height="6"/><rect x="36" y="15" width="6" height="6"/><rect x="6" y="24" width="6" height="6"/><rect x="15" y="24" width="6" height="6"/><rect x="27" y="24" width="6" height="6"/><rect x="36" y="24" width="6" height="6"/></g></svg>
<div class="t" style="left:816.09px;top:1924.80px;font-size:40.84px;line-height:40.84px;color:#0d0d0d;transform:scaleX(0.9534);">Emily Brickhouse</div>
<div class="t" style="left:1191.90px;top:1924.80px;font-size:40.84px;line-height:40.84px;color:#0d0d0d;transform:scaleX(0.9766);">SK8</div>
<div class="t" style="left:1643.24px;top:1924.11px;font-size:43.31px;line-height:43.31px;color:#f04523;transform:scaleX(0.9522);">2,515</div>
<div class="t" style="left:1755.77px;top:1924.12px;font-size:43.30px;line-height:43.30px;color:#0d0d0d;transform:scaleX(0.8282);">...</div>
<div class="t" style="left:1853.57px;top:1924.11px;font-size:43.31px;line-height:43.31px;color:#0d0d0d;transform:scaleX(1.0566);">09/17/20</div>
<div class="r" style="left:712px;top:776px;width:3px;height:1218px;background:#8d949b;"></div>
<svg class="r" style="left:900px;top:1380px;filter:drop-shadow(1px 2px 2px rgba(0,0,0,0.35))" width="60" height="80" viewBox="0 0 60 80"><path d="M21.8 14.3 L21.8 62.2 L31.5 54.2 L39 68.9 L48.7 64.7 L40.7 44.5 L52 44.5 Z" fill="#fff" stroke="#fff" stroke-width="0.8" stroke-linejoin="round"/><path d="M25 21.6 L25 55.7 L32.5 49.5 L40.8 65.6 L44.8 63 L36.9 42 L45.3 42 Z" fill="#000"/></svg>
<div class="r" style="left:708px;top:682px;width:268px;height:93px;background:transparent;border:10px solid #5e50f8;"></div>
<div class="r" style="left:714px;top:1340px;width:432px;height:92px;background:transparent;border:10px solid #5e50f8;"></div>
<div class="r" style="left:518px;top:785px;width:895px;height:511px;background:#222b35;border-radius:12px;box-shadow:0 4px 14px rgba(0,0,0,0.22);z-index:5"></div>
<svg class="r" style="left:941px;top:1294px;z-index:5" width="50" height="32" viewBox="0 0 50 32"><path d="M0 0H50L25 31Z" fill="#222b35"/></svg>
<div class="r" style="left:545px;top:980px;width:840px;height:3.5px;background:#c8ced4;z-index:6;"></div>
<div class="t" style="left:588.86px;top:845.94px;font-size:44.48px;line-height:44.48px;color:#f7f8f9;font-weight:bold;transform:scaleX(0.8790);z-index:6;">Emily Brickhouse</div>
<div class="t" style="left:590.00px;top:908.69px;font-size:38.52px;line-height:38.52px;color:#f7f8f9;transform:scaleX(1.0385);z-index:6;">Customer since 09/18/2018</div>
<div class="t" style="left:589.93px;top:1026.23px;font-size:42.01px;line-height:42.01px;color:#f7f8f9;font-weight:bold;transform:scaleX(0.8741);z-index:6;">Total Orders</div>
<div class="t" style="left:968.35px;top:1026.23px;font-size:42.01px;line-height:42.01px;color:#f7f8f9;font-weight:bold;transform:scaleX(0.9823);z-index:6;">0</div>
<div class="t" style="left:590.46px;top:1099.13px;font-size:41.42px;line-height:41.42px;color:#f7f8f9;font-weight:bold;transform:scaleX(0.8676);z-index:6;">Gross Revenue</div>
<div class="t" style="left:969.50px;top:1099.13px;font-size:41.42px;line-height:41.42px;color:#f7f8f9;font-weight:bold;transform:scaleX(0.9676);z-index:6;">$0.00</div>
<div class="t" style="left:590.60px;top:1187.16px;font-size:38.08px;line-height:38.08px;color:#f7f8f9;font-style:italic;transform:scaleX(0.9452);z-index:6;">Activity from the last 12 months</div>
</body></html>
